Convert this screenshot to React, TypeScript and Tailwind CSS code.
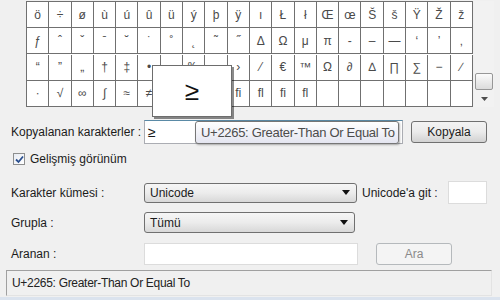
import React from "react";

const rows: string[][] = [
  ["ö", "÷", "ø", "ù", "ú", "û", "ü", "ý", "þ", "ÿ", "ı", "Ł", "ł", "Œ", "œ", "Š", "š", "Ÿ", "Ž", "ž"],
  ["ƒ", "ˆ", "ˇ", "ˉ", "˘", "˙", "˚", "˛", "˜", "˝", "Δ", "Ω", "μ", "π", "‐", "–", "—", "‘", "’", "‚"],
  ["“", "”", "„", "†", "‡", "•", "…", "‰", "‹", "›", "⁄", "€", "™", "Ω", "∂", "∆", "∏", "∑", "−", "∕"],
  ["∙", "√", "∞", "∫", "≈", "≠", "≤", "≥", "◊", "ﬁ", "ﬂ", "ﬁ", "ﬂ", "", "", "", "", "", "", ""],
];

const font = { fontFamily: "'Liberation Sans', 'DejaVu Sans', sans-serif" };

function Combo({ value, width }: { value: string; width: string }) {
  return (
    <div
      className={`${width} h-[20px] flex items-center justify-between pl-[5px] pr-[6px] rounded-[3px] border border-[#707070] bg-gradient-to-b from-[#f6f6f6] via-[#ececec] to-[#d8d8d8] text-[12px] text-[#1b1b1b]`}
    >
      <span>{value}</span>
      <svg width="8" height="5" viewBox="0 0 8 5">
        <path d="M0 0 H8 L4 5 Z" fill="#111" />
      </svg>
    </div>
  );
}

export default function App() {
  return (
    <div
      className="relative w-[500px] h-[300px] overflow-hidden bg-[#f0f0f0] flex flex-col text-[#1b1b1b]"
      style={font}
    >
      {/* Character grid */}
      <div className="flex h-[107px] pt-[1px]">
        <div className="w-[26px] shrink-0" />
        <div className="w-[447px] grid grid-cols-[repeat(20,minmax(0,1fr))] border-l border-t border-[#707070] bg-white">
          {rows.flat().map((c, i) => (
            <div
              key={i}
              className="h-[26px] border-r border-b border-[#707070] flex items-center justify-center text-[12px] text-[#4a4a4a]"
            >
              {c}
            </div>
          ))}
        </div>
        <div className="w-[20px] ml-[1px] flex flex-col items-center bg-[#f2f2f2]">
          <div className="flex-1" />
          <div className="w-[18px] h-[17px] rounded-[2px] border border-[#979797] bg-gradient-to-b from-[#fbfbfb] to-[#dcdcdc]" />
          <div className="h-[17px] flex items-center justify-center">
            <svg width="7" height="4" viewBox="0 0 7 4">
              <path d="M0 0 H7 L3.5 4 Z" fill="#4d4d4d" />
            </svg>
          </div>
        </div>
      </div>

      {/* Copied characters */}
      <div className="flex items-center mt-[13px] h-[24px]">
        <div className="w-[144px] pl-[11px] text-[12px]">Kopyalanan karakterler :</div>
        <div className="w-[259px] h-[24px] border border-[#abadb3] border-t-[#5a8aa6] bg-white pl-[3px] flex items-center text-[14px]">
          ≥
        </div>
        <button className="ml-[8px] w-[76px] h-[22px] rounded-[3px] border border-[#707070] bg-gradient-to-b from-[#f3f3f3] via-[#ebebeb] to-[#d2d2d2] text-[12px]">
          Kopyala
        </button>
      </div>

      {/* Advanced view */}
      <div className="flex items-center mt-[8px] h-[14px] pl-[13px] gap-[5px]">
        <div className="w-[12px] h-[12px] border border-[#8e8f8f] bg-gradient-to-br from-[#e8ecf3] to-white flex items-center justify-center">
          <svg width="9" height="9" viewBox="0 0 9 9">
            <path d="M1 4.5 L3.5 7 L8 1.5" stroke="#2a4f8f" strokeWidth="1.8" fill="none" />
          </svg>
        </div>
        <span className="text-[12px]">Gelişmiş görünüm</span>
      </div>

      {/* Character set */}
      <div className="flex items-center mt-[15px] h-[23px]">
        <div className="w-[144px] pl-[11px] text-[12px]">Karakter kümesi :</div>
        <Combo value="Unicode" width="w-[213px]" />
        <div className="ml-[5px] w-[86px] text-[12px]">Unicode'a git :</div>
        <div className="w-[39px] h-[23px] border border-[#dcdcdc] bg-white" />
      </div>

      {/* Group by */}
      <div className="flex items-center mt-[8px] h-[21px]">
        <div className="w-[144px] pl-[11px] text-[12px]">Grupla :</div>
        <Combo value="Tümü" width="w-[211px] h-[21px]" />
      </div>

      {/* Search */}
      <div className="flex items-center mt-[10px] h-[22px]">
        <div className="w-[144px] pl-[11px] text-[12px]">Aranan :</div>
        <div className="w-[214px] h-[22px] border border-[#dcdcdc] bg-white" />
        <button className="ml-[18px] w-[76px] h-[22px] rounded-[3px] border border-[#b5b9bc] bg-[#f4f4f4] text-[12px] text-[#8a8a8a]">
          Ara
        </button>
      </div>

      {/* Status bar */}
      <div className="mt-[5px] ml-[6px] w-[486px] h-[26px] border border-[#a0a0a0] border-r-[#e3e3e3] border-b-[#e3e3e3] flex items-center pl-[5px] text-[12px] tracking-[-0.3px] text-[#222]">
        U+2265: Greater-Than Or Equal To
      </div>
      <div className="flex-1 mt-[1px] bg-[#dbe3ee]" />

      {/* Magnified character popup */}
      <div className="absolute left-[152px] top-[65px] w-[80px] h-[52px] bg-white border border-[#6d6d6d] shadow-[2px_2px_0_rgba(0,0,0,0.45)] flex items-center justify-center text-[26px] text-[#111]">
        ≥
      </div>

      {/* Tooltip */}
      <div className="absolute left-[195px] top-[121px] w-[204px] h-[23px] rounded-[3px] border border-[#767676] bg-gradient-to-b from-white to-[#e4e5f0] shadow-[1px_1px_2px_rgba(0,0,0,0.3)] flex items-center pl-[5px] text-[13px] tracking-[-0.3px] text-[#4c4c4c] whitespace-nowrap">
        U+2265: Greater-Than Or Equal To
      </div>
    </div>
  );
}
